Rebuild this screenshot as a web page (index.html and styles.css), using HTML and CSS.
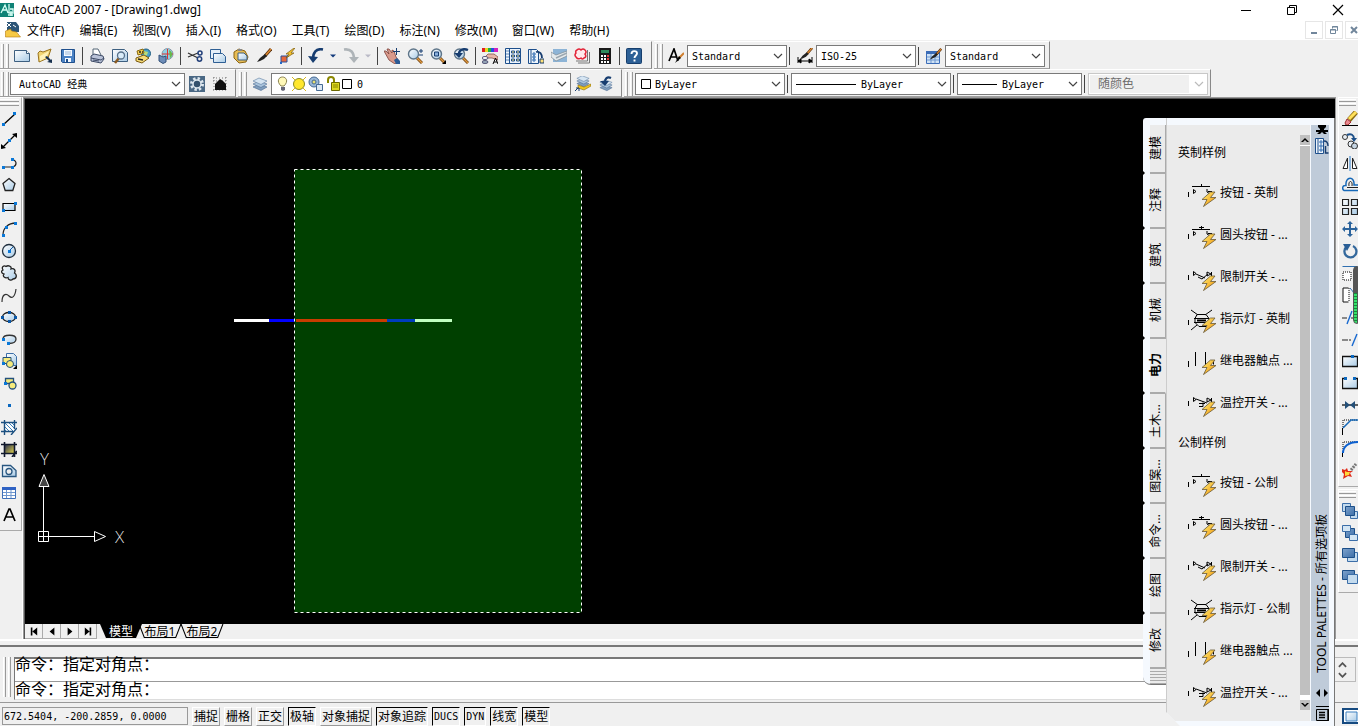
FILE: index.html
```html
<!DOCTYPE html>
<html lang="zh-CN">
<head>
<meta charset="utf-8">
<title>AutoCAD 2007 - [Drawing1.dwg]</title>
<link rel="stylesheet" href="styles.css">
</head>
<body>
<svg class="defs" aria-hidden="true">
  <defs>
    <linearGradient id="page" x1="0" y1="0" x2="1" y2="1"><stop offset="0" stop-color="#fff"/><stop offset="1" stop-color="#a9cbe6"/></linearGradient>
    <linearGradient id="amber" x1="0" y1="0" x2="1" y2="1"><stop offset="0" stop-color="#fff27a"/><stop offset="1" stop-color="#f08a00"/></linearGradient>
    <linearGradient id="steel" x1="0" y1="0" x2="1" y2="1"><stop offset="0" stop-color="#7fa3cc"/><stop offset="1" stop-color="#3c6ea8"/></linearGradient>
    <linearGradient id="dusk" x1="0" y1="0" x2="1" y2="1"><stop offset="0" stop-color="#1c2452"/><stop offset="1" stop-color="#e6d84a"/></linearGradient>
    <symbol id="chev" viewBox="0 0 10 10"><path d="M1 3l4 4 4-4" fill="none" stroke="currentColor" stroke-width="1.2"/></symbol>
    <symbol id="brush" viewBox="0 0 16 16"><path d="M15 1L9 8" stroke="#5a3210" stroke-width="3"/><path d="M15 1L9 8" stroke="#e08a30" stroke-width="1.4"/><path d="M9 6l2 2-3 3-4 2-3 1 3-4z" fill="#222"/></symbol>
    <symbol id="lens" viewBox="0 0 16 16"><path d="M10 10l5 5" stroke="#7a4a14" stroke-width="3"/><path d="M10 10l5 5" stroke="#e09a40" stroke-width="1.2"/><circle cx="6.500" cy="6" r="5" fill="url(#page)" stroke="#5d7488" stroke-width="1.400"/></symbol>
    <symbol id="stack" viewBox="0 0 16 16"><path d="M1 11l6-3 8 3-6 3.500z" fill="#7f9dbd" stroke="#4a6a90" stroke-width=".6"/><path d="M1 8l6-3 8 3-6 3.500z" fill="#a9c3dc" stroke="#4a6a90" stroke-width=".6"/><path d="M1 5l6-3 8 3-6 3.500z" fill="#d6e5f2" stroke="#5a7aa0" stroke-width=".6"/></symbol>
    <symbol id="bolt" viewBox="0 0 16 16"><path d="M9.500 1L1 8.500h5L2.500 15.500 15 6.500H9.500L14 1z" fill="url(#amber)" stroke="#6b5a38" stroke-width=".8"/></symbol>
    <symbol id="push" viewBox="0 0 30 24"><path d="M5 3.500h18M14.500 1v2M1.500 9v5M20 6v3l3 2M21 8.500h4M24.500 8v5" fill="none" stroke="#000"/><path d="M6.500 6.500v4l2.500-2z" fill="none" stroke="#000"/><use href="#bolt" x="14" y="8" width="16" height="16"/></symbol>
    <symbol id="round" viewBox="0 0 30 24"><path d="M5 4.500h18M12 2.500h5M14.500 1v3M1.500 9v5M20 6v3l3 2M21 8.500h4M24.500 8v5" fill="none" stroke="#000"/><path d="M6.500 6.500v4l2.500-2z" fill="none" stroke="#000"/><use href="#bolt" x="14" y="8" width="16" height="16"/></symbol>
    <symbol id="limit" viewBox="0 0 30 24"><path d="M1.500 8v5M6.500 4.500v4l2.500-2zM9 7l9 4M11 10l4 2 6-5M20 5l4 2-4 2zM24.500 5v7" fill="none" stroke="#000"/><use href="#bolt" x="14" y="8" width="16" height="16"/></symbol>
    <symbol id="lamp" viewBox="0 0 30 24"><path d="M4 1l7 5M25 1l-7 5M4 21l6-5M1.500 11v5M10 5.500h9l3 4v4l-3 4h-7l-4-4v-4zM7 9.500h15M7 13.500h15" fill="none" stroke="#000"/><path d="M10 10.500h9v2h-9z"/><use href="#bolt" x="14" y="8" width="16" height="16"/></symbol>
    <symbol id="relay" viewBox="0 0 30 24"><path d="M8.500 1v14M18.500 1v15M1.500 10v6M24 9.500h2.500v4" fill="none" stroke="#000"/><use href="#bolt" x="14" y="8" width="16" height="16"/></symbol>
    <symbol id="thermo" viewBox="0 0 30 24"><path d="M1.500 8v5M6.500 4.500v4l2.500-2zM9 6l11 4M12 13.500h4v-4M20 5l4 2-4 2zM24.500 5v7M12 10.500h6" fill="none" stroke="#000"/><use href="#bolt" x="14" y="8" width="16" height="16"/></symbol>
  </defs>
</svg>
<div class="app">
  <header class="titlebar">
    <svg class="logo" viewBox="0 0 14 14"><path d="M0 0h14v14H0z" fill="#0f8276"/><path d="M1 10l4-8 3 8M3 7h4M9 1v9h4V6h-3M8 12h5M11 8v5" fill="none" stroke="#d7fff6" stroke-width="1.300"/></svg>
    <h1>AutoCAD 2007 - [Drawing1.dwg]</h1>
    <div class="winbtns">
      <button aria-label="最小化"><svg viewBox="0 0 12 12"><path d="M1 6.500h10" stroke="#000"/></svg></button>
      <button aria-label="还原"><svg viewBox="0 0 12 12"><path d="M1.500 3.500h7v7h-7zM3.500 3.500v-2h7v7h-2" fill="none" stroke="#000"/></svg></button>
      <button aria-label="关闭"><svg viewBox="0 0 12 12"><path d="M1 1l10 10M11 1L1 11" stroke="#000" stroke-width="1.200"/></svg></button>
    </div>
  </header>
  <nav class="menubar">
    <svg class="docicon" viewBox="0 0 16 16"><path d="M2 0h9l3 4v6H2z" fill="#2d5577"/><path d="M2 1l4 4M6 1L2 5M8 3l3 2" stroke="#fff"/><path d="M.500 15V9l5-2 1 2 5 1 4 5z" fill="#f6c944" stroke="#b57a10" stroke-width=".6"/></svg>
    <button>文件(F)</button><button>编辑(E)</button><button>视图(V)</button><button>插入(I)</button><button>格式(O)</button><button>工具(T)</button><button>绘图(D)</button><button>标注(N)</button><button>修改(M)</button><button>窗口(W)</button><button>帮助(H)</button>
    <div class="mdibtns">
      <button aria-label="最小化图形"><svg viewBox="0 0 10 10"><path d="M2 8h6" stroke="#71869b" stroke-width="2"/></svg></button>
      <button aria-label="还原图形"><svg viewBox="0 0 10 10"><path d="M1.500 4.500h5v4h-5zM1 5h6M3.500 3.500v-2h5v4h-1M3 2h6" fill="none" stroke="#71869b"/></svg></button>
      <button aria-label="关闭图形"><svg viewBox="0 0 10 10"><path d="M2 2l6 6M8 2L2 8" stroke="#71869b" stroke-width="2"/></svg></button>
    </div>
  </nav>

  <div class="barrow">
    <div class="bar standard">
      <i class="grip"></i>
      <button class="tb" aria-label="新建"><svg viewBox="0 0 16 16"><path d="M.5 2.500h12l3 3v8H.5z" fill="url(#page)" stroke="#3d5f80"/><path d="M12.500 2.500v3h3" fill="#fff" stroke="#3d5f80"/></svg></button>
      <button class="tb" aria-label="打开"><svg viewBox="0 0 16 16"><path d="M1 5l2-2 3 1 8-3-3 9-9 4z" fill="#f1d574" stroke="#9a7420"/><path d="M3 8l9-5-3 7-6 3" fill="#fff3b8"/><path d="M15 15l-5-1 2-1-4-4 2-1 4 4 1-1z" fill="#16304e"/></svg></button>
      <button class="tb" aria-label="保存"><svg viewBox="0 0 16 16"><path d="M1.500 1.500h13v13h-12l-1-1z" fill="#4b82c4" stroke="#1f4f8c"/><path d="M4 2h8v6H4zM5 10h6v4H5z" fill="#f4f9ff"/><path d="M5 4h6M5 6h6" stroke="#9db8d6"/><path d="M6 11h2v3H6z" fill="#1f4f8c"/></svg></button>
      <i class="sep"></i>
      <button class="tb" aria-label="打印"><svg viewBox="0 0 16 16"><path d="M4 7V1l5 0 3 6" fill="#fff" stroke="#567"/><path d="M2 8l3-2 9 2 1 3-3 4-10-2z" fill="#b9c2d8" stroke="#3e4b66"/><path d="M2 10l10 2 3-2M4 12l6 1" fill="none" stroke="#3e4b66"/></svg></button>
      <button class="tb" aria-label="打印预览"><svg viewBox="0 0 16 16"><path d="M.5 1.500h12l3 3v9H.5z" fill="url(#page)" stroke="#3d5f80"/><path d="M7 10l-4 5" stroke="#8a5a20" stroke-width="2.500"/><circle cx="9" cy="7.500" r="3.500" fill="#d9ecf9" stroke="#58718a" stroke-width="1.300"/></svg></button>
      <button class="tb" aria-label="发布"><svg viewBox="0 0 16 16"><circle cx="11" cy="5.500" r="4.500" fill="#4aa0c8" stroke="#1f5c80"/><path d="M9 3l4 1-1 3-3 1z" fill="#b9dc7a"/><path d="M2 3l6-2 1 4-6 2z" fill="#f4cf50" stroke="#8a6a10"/><path d="M1 10l8-3 5 3-7 5-6-2z" fill="#f7dc78" stroke="#7a5a10"/><path d="M4 4h2M7 4h1M3 11l5 1" stroke="#222" stroke-width="1.500"/></svg></button>
      <button class="tb" aria-label="三维发布"><svg viewBox="0 0 16 16"><circle cx="9.500" cy="6" r="5.500" fill="#8fd0e4" stroke="#8a9aa8"/><path d="M9.500 1v10M4 6h11" stroke="#d33"/><path d="M11 2c4 2 4 6 1 8z" fill="#68b84a"/><path d="M1 7l4 2 3-1v6l-3 1.500L1 13z" fill="#6e8db8" stroke="#33517a"/></svg></button>
      <i class="sep"></i>
      <button class="tb" aria-label="剪切"><svg viewBox="0 0 16 16"><path d="M1 5l10 5M1 9l10-4" stroke="#333" stroke-width="1.300"/><circle cx="13" cy="5" r="2" fill="none" stroke="#23407a" stroke-width="1.500"/><circle cx="12.500" cy="11" r="2.200" fill="none" stroke="#23407a" stroke-width="1.500"/></svg></button>
      <button class="tb" aria-label="复制"><svg viewBox="0 0 16 16"><path d="M.5 1.500h10v9H.5z" fill="#e6f0f9" stroke="#2f5f94"/><path d="M3.500 5.500h9l3 3v6h-12z" fill="url(#page)" stroke="#2f5f94"/></svg></button>
      <button class="tb" aria-label="粘贴"><svg viewBox="0 0 16 16"><path d="M6 1l6 2 3 6-2 5-7 1-5-5V4z" fill="#e8bd55" stroke="#8a6414"/><path d="M5 5h6l3 3v4H5z" fill="url(#page)" stroke="#3d5f80"/><path d="M5 1h4v2H5z" fill="#888"/></svg></button>
      <button class="tb" aria-label="特性匹配"><svg viewBox="0 0 16 16"><use href="#brush" width="16" height="16"/></svg></button>
      <button class="tb" aria-label="块编辑器"><svg viewBox="0 0 16 16"><path d="M2 8h6v6H2z" fill="#e8683c" stroke="#2a4f9a"/><path d="M1 14h2v2H1zM8 7h2v2H8z" fill="#2468c8"/><path d="M15 0L7 6h3l-3 4 8-5h-3l4-5z" fill="#f6c430" stroke="#7a5a10" stroke-width=".7"/></svg></button>
      <i class="sep"></i>
      <button class="tb" aria-label="放弃"><svg viewBox="0 0 16 16"><path d="M15 1.500C8 0 5 5 5 11" fill="none" stroke="#173d70" stroke-width="2.600"/><path d="M0 8l10 1-5 6z" fill="#173d70"/></svg></button>
      <button class="drop" aria-label="放弃列表"><svg viewBox="0 0 6 6"><path d="M0 1.500h6l-3 3z" fill="#123a7c"/></svg></button>
      <button class="tb" aria-label="重做"><svg viewBox="0 0 16 16"><path d="M1 1.500c7-1 10 3 10 10" fill="none" stroke="#aeb4b8" stroke-width="2.600"/><path d="M6 9h10l-5 6z" fill="#aeb4b8"/></svg></button>
      <button class="drop" aria-label="重做列表"><svg viewBox="0 0 6 6"><path d="M0 1.500h6l-3 3z" fill="#b9b9c6"/></svg></button>
      <i class="sep"></i>
      <button class="tb" aria-label="平移"><svg viewBox="0 0 16 16"><path d="M0 3l2 0 3 3-2-5 2 0 3 4 0-3 2 1 2 6 3 4-4 3-6-4z" fill="#d99a8c" stroke="#7c4038" stroke-width=".8"/><path d="M10 12l3-2 3 3v3h-4z" fill="#2b5a94"/><path d="M12.500 0v7M9 3.500h7" stroke="#173d70"/></svg></button>
      <button class="tb" aria-label="实时缩放"><svg viewBox="0 0 16 16"><use href="#lens" width="16" height="16"/><path d="M12 3h4M14 1v4M12 7h4" stroke="#173d70"/></svg></button>
      <button class="tb" aria-label="窗口缩放"><svg viewBox="0 0 16 16"><use href="#lens" width="16" height="16"/><path d="M4.500 4h4v4h-4z" fill="#8ab0dc" stroke="#173d70"/><path d="M16 12v4h-4z"/></svg></button>
      <button class="tb" aria-label="缩放上一个"><svg viewBox="0 0 16 16"><use href="#lens" width="16" height="16"/><path d="M15 2C10 0 6 2 6 6" fill="none" stroke="#173d70" stroke-width="2.400"/><path d="M1 5h9l-4 5z" fill="#173d70"/></svg></button>
      <i class="sep"></i>
      <button class="tb" aria-label="特性"><svg viewBox="0 0 16 16"><path d="M0 0h3v4H0z" fill="#e02020"/><path d="M3 0h3v4H3z" fill="#e8d820"/><path d="M6 0h3v4H6z" fill="#20b040"/><path d="M9 0h3v4H9z" fill="#2050e0"/><path d="M12 0h4v4h-4z" fill="#d020c0"/><path d="M6 6h6l4 3v3l-6-2-4 0-3-1z" fill="#e8b7a8" stroke="#74423a" stroke-width=".7"/><ellipse cx="3" cy="10" rx="3" ry="1.500" fill="#fff" stroke="#557"/><ellipse cx="3" cy="14" rx="3" ry="1.500" fill="#9ab" stroke="#557"/><path d="M11 16l2.500-6 2.500 6M12 14h3" fill="none" stroke="#000"/></svg></button>
      <button class="tb" aria-label="设计中心"><svg viewBox="0 0 16 16"><path d="M.5.500h15v15H.5z" fill="#eef5fc" stroke="#1d4f8c"/><path d="M4.500 1v14" stroke="#1d4f8c"/><path d="M1 3h3M1 6h3M1 9h3M1 12h3" stroke="#5a86b8"/><path d="M6.500 3h3v2h-3zM11.500 3h3v2h-3zM6.500 7h3v2h-3zM11.500 7h3v2h-3zM6.500 11h3v2h-3zM11.500 11h3v2h-3z" fill="#ffe27a" stroke="#1d4f8c"/></svg></button>
      <button class="tb" aria-label="工具选项板"><svg viewBox="0 0 16 16"><path d="M.5 1.500h8l2 2v12H.5z" fill="#eef5fc" stroke="#1d4f8c"/><path d="M3 1v14" stroke="#1d4f8c"/><path d="M5 5h2v2H5zM5 8h2v2H5zM5 11h2v2H5z" fill="none" stroke="#2f6ab0"/><path d="M8 4c4-1 6 2 6 6" fill="none" stroke="#173d70" stroke-width="1.800"/><path d="M12 11h4v4h-4z" fill="#ffe27a" stroke="#173d70"/></svg></button>
      <button class="tb" aria-label="图纸集"><svg viewBox="0 0 16 16"><path d="M2 1h14v13H2z" fill="#8db4d6"/><path d="M0 4l5 3 11-4v5L5 13 0 9z" fill="#e4e9ec" stroke="#7d8a94" stroke-width=".7"/><path d="M5 10l11-5" stroke="#9aa6ae" stroke-width="1.500"/></svg></button>
      <button class="tb" aria-label="标记集"><svg viewBox="0 0 16 16"><path d="M4 15h11.500V4M2 13h11.500V2" fill="none" stroke="#777"/><path d="M3 2q2-2 4 0 2-2 4 0 2 2 0 4 2 3-1 4 -2 2-3 0-3 2-5-1-2-2 0-4-1-2 1-3z" fill="#ffe9ec" stroke="#e32438" stroke-width="1.500"/></svg></button>
      <button class="tb" aria-label="计算器"><svg viewBox="0 0 16 16"><path d="M2 0h12v16H2z" fill="#1a1a1a"/><path d="M4 2h8v3H4z" fill="#2f8a5c"/><path d="M4 7h2v2H4zM7 7h2v2H7zM4 10h2v2H4zM7 10h2v2H7zM4 13h2v2H4zM7 13h2v2H7zM10 13h2v2h-2z" fill="#fff"/><path d="M10 7h2v2h-2zM10 10h2v2h-2z" fill="#e33"/></svg></button>
      <i class="sep"></i>
      <button class="tb" aria-label="帮助"><svg viewBox="0 0 16 16"><rect x=".5" y=".5" width="15" height="15" rx="1" fill="#2d6096" stroke="#163e6c"/><path d="M5.500 6c0-4 5.500-3.500 5.500-.5 0 2-2.500 2-2.500 4.500M8.500 11.500v2" fill="none" stroke="#fff" stroke-width="1.900"/></svg></button>
    </div>
    <div class="bar">
      <i class="grip"></i>
      <button class="tb" aria-label="文字样式"><svg viewBox="0 0 16 16"><path d="M1 13L6 1l4 12M3 9h6" fill="none" stroke="#000" stroke-width="1.700"/><path d="M16 5l-5 5" stroke="#d08030" stroke-width="2"/><path d="M11 8l2 2-6 5z"/></svg></button>
      <div class="combo w100"><select aria-label="文字样式列表"><option>Standard</option></select><svg class="chev"><use href="#chev"/></svg></div>
      <i class="sep"></i>
      <button class="tb" aria-label="标注样式"><svg viewBox="0 0 16 16"><use href="#brush" x="2" y="-1" width="14" height="14"/><path d="M1 9v6M15 9v6M1 13h14M1 13l3-2v4zM15 13l-3-2v4z" stroke="#000"/></svg></button>
      <div class="combo w100"><select aria-label="标注样式列表"><option>ISO-25</option></select><svg class="chev"><use href="#chev"/></svg></div>
      <i class="sep"></i>
      <button class="tb" aria-label="表格样式"><svg viewBox="0 0 16 16"><path d="M.5 3.500h13v12H.5z" fill="#cfe2f5" stroke="#3c6db8"/><path d="M0 3h14v3H0z" fill="#3c6db8"/><path d="M5 6v9M9 6v9M1 9h12M1 12h12" stroke="#6f97cf"/><use href="#brush" x="3" y="0" width="13" height="13"/></svg></button>
      <div class="combo w100"><select aria-label="表格样式列表"><option>Standard</option></select><svg class="chev"><use href="#chev"/></svg></div>
    </div>
  </div>

  <div class="barrow">
    <div class="bar">
      <i class="grip"></i>
      <div class="combo w175"><select aria-label="工作空间"><option>AutoCAD 经典</option></select><svg class="chev"><use href="#chev"/></svg></div>
      <button class="tb" aria-label="工作空间设置"><svg viewBox="0 0 16 16"><path d="M0 0h16v16H0z" fill="#4a6884"/><circle cx="8" cy="8" r="5.500" fill="none" stroke="#dde6ee" stroke-width="3" stroke-dasharray="2.300 2"/><circle cx="8" cy="8" r="4" fill="#33506c" stroke="#dfe8ef" stroke-width="1.500"/></svg></button>
      <button class="tb" aria-label="我的工作空间"><svg viewBox="0 0 16 16"><path d="M1 2h14M1 5h14M2 1v14M14 1v14M1 14h14" stroke="#777" stroke-dasharray="1 2"/><path d="M3 8l5-5 3 2 3 3v6H3z" fill="#111"/></svg></button>
    </div>
    <div class="bar">
      <i class="grip"></i>
      <button class="tb" aria-label="图层特性"><svg viewBox="0 0 16 16"><use href="#stack" width="16" height="16"/></svg></button>
      <div class="combo w300">
        <svg class="lay" viewBox="0 0 78 16">
          <path d="M6 10C1 5 4 1 7.500 1S14 5 9 10z" fill="#fff8b8" stroke="#8a8250"/><path d="M6 11h4v3l-2 1-2-1z" fill="#667"/>
          <circle cx="24" cy="8" r="5.500" fill="#ffe72e" stroke="#8a8a20"/><path d="M17 1l3 3M31 1l-3 3M17 15l3-3M31 15l-3-3" stroke="#d8b820"/>
          <circle cx="39" cy="6" r="5" fill="#9ab8d8" stroke="#456a94"/><circle cx="39" cy="6" r="2" fill="#e8e070" stroke="#456a94"/><path d="M41.500 8.500h6v6h-6z" fill="#dce8f4" stroke="#456a94"/>
          <path d="M53 7V4c0-4 6-4 6 0v4" fill="none" stroke="#8a8600" stroke-width="2"/><path d="M56.500 6.500h8v8h-8z" fill="#ddd820" stroke="#6c6800"/><path d="M58 9h5M58 11h5" stroke="#8a8600"/>
          <path d="M67.500 3.500h9v9h-9z" fill="#fff" stroke="#000"/>
        </svg>
        <select aria-label="图层"><option>0</option></select><svg class="chev"><use href="#chev"/></svg></div>
      <button class="tb" aria-label="置为当前图层"><svg viewBox="0 0 16 16"><use href="#stack" x="1" y="-2" width="14" height="14"/><path d="M3 9l6 2 7-3v2l-7 4-6-2z" fill="#f0c61c" stroke="#8a6a10" stroke-width=".6"/><path d="M0 15l3-3M1 12h3v3" fill="none" stroke="#173d70"/></svg></button>
      <button class="tb" aria-label="上一个图层"><svg viewBox="0 0 16 16"><use href="#stack" y="2" width="16" height="14"/><path d="M13 2C9 0 7 3 7 6" fill="none" stroke="#173d70" stroke-width="2.200"/><path d="M2 5h9l-4 5z" fill="#173d70"/></svg></button>
    </div>
    <div class="bar tight">
      <i class="grip"></i>
      <div class="combo w150"><svg class="swatch" viewBox="0 0 10 10"><path d="M.5.500h9v9h-9z" fill="#fff" stroke="#000"/></svg><select aria-label="颜色"><option>ByLayer</option></select><svg class="chev"><use href="#chev"/></svg></div>
      <i class="sep"></i>
      <div class="combo w160"><i class="line long"></i><select aria-label="线型"><option>ByLayer</option></select><svg class="chev"><use href="#chev"/></svg></div>
      <i class="sep"></i>
      <div class="combo w125"><i class="line"></i><select aria-label="线宽"><option>ByLayer</option></select><svg class="chev"><use href="#chev"/></svg></div>
      <i class="sep"></i>
      <div class="combo w120 off"><select aria-label="打印样式" disabled><option>随颜色</option></select><svg class="chev"><use href="#chev"/></svg></div>
    </div>
  </div>

  <main class="work">
    <div class="side left">
      <div class="vbar">
        <i class="hgrip"></i>
        <button aria-label="直线"><svg viewBox="0 0 16 16"><path d="M2 14L14 3" stroke="#000" stroke-width="1.300"/><path d="M1 12h3v3H1zM12 1h3v3h-3z" fill="#0a78d8"/></svg></button>
        <button aria-label="构造线"><svg viewBox="0 0 16 16"><path d="M1 15L15 1" stroke="#000" stroke-width="1.300"/><path d="M0 16v-5l5 4zM16 0v5l-5-4z"/><path d="M7 6h3v3H7z" fill="#0a78d8"/></svg></button>
        <button aria-label="多段线"><svg viewBox="0 0 16 16"><path d="M2 12h10c5-2 3-8-1-7" fill="none" stroke="#222" stroke-width="1.200"/><path d="M1 11h3v3H1zM10 11h3v3h-3zM10 3h3v3h-3z" fill="#0a78d8"/></svg></button>
        <button aria-label="正多边形"><svg viewBox="0 0 16 16"><path d="M8 1.500l6 5-2.200 7H4.200L2 6.500z" fill="url(#page)" stroke="#222" stroke-width="1.300"/></svg></button>
        <button aria-label="矩形"><svg viewBox="0 0 16 16"><path d="M2 4.500h12v7H2z" fill="url(#page)" stroke="#000" stroke-width="1.200"/><path d="M1 10h3v3H1zM13 3h3v3h-3z" fill="#0a78d8"/></svg></button>
        <button aria-label="圆弧"><svg viewBox="0 0 16 16"><path d="M2 14C2 7 7 2 15 2" fill="none" stroke="#222" stroke-width="1.300"/><path d="M1 13h3v3H1zM4 5h3v3H4zM13 1h3v3h-3z" fill="#0a78d8"/></svg></button>
        <button aria-label="圆"><svg viewBox="0 0 16 16"><circle cx="8" cy="8" r="6.500" fill="url(#page)" stroke="#1f2f3f" stroke-width="1.300"/><path d="M8 8l4-4" stroke="#0a58a8"/><path d="M7 7h3v3H7z" fill="#0a78d8"/></svg></button>
        <button aria-label="修订云线"><svg viewBox="0 0 16 16"><path d="M2 5C0 2 3 0 5 1.500 7 0 11 1 10 4c3-1 5 1 3.500 4 3 2 2 6-1.500 6-2 2-5 1-5-1.500-3 1-6-1-4-3.500C0 8 0 6 2 5z" fill="url(#page)" stroke="#222" stroke-width="1.300"/></svg></button>
        <button aria-label="样条曲线"><svg viewBox="0 0 16 16"><path d="M1 15c0-8 4-9 7-6s6 1 7-7" fill="none" stroke="#333" stroke-width="1.200"/></svg></button>
        <button aria-label="椭圆"><svg viewBox="0 0 16 16"><ellipse cx="8" cy="8" rx="6.500" ry="4.500" fill="url(#page)" stroke="#222" stroke-width="1.300"/><path d="M0 7h3v3H0zM13 7h3v3h-3zM7 2h3v3H7zM7 11h3v3H7z" fill="#0a58a8"/></svg></button>
        <button aria-label="椭圆弧"><svg viewBox="0 0 16 16"><path d="M2 8c0-5 13-5 13 0 0 3-3 4.500-7 4.500" fill="url(#page)" stroke="#333" stroke-width="1.300"/><path d="M1 7h3v3H1zM6 11h3v3H6z" fill="#0a78d8"/></svg></button>
        <button aria-label="插入块"><svg viewBox="0 0 16 16"><path d="M5.500.500h7l3 3v9h-10z" fill="url(#page)" stroke="#3c6ea8"/><path d="M2 4.500h8v6H2z" fill="#f6eb7c" stroke="#23507c"/><circle cx="9" cy="11" r="3.500" fill="#f6eb7c" stroke="#23507c"/><path d="M1 9h3v3H1z" fill="#0a78d8"/><path d="M16 12v4h-4z"/></svg></button>
        <button aria-label="创建块"><svg viewBox="0 0 16 16"><path d="M4.500 3.500h8v5h-8z" fill="#f6eb7c" stroke="#23507c" stroke-width="1.300"/><circle cx="11.500" cy="10.500" r="3.500" fill="#f6eb7c" stroke="#23507c" stroke-width="1.300"/><path d="M3 7h3v3H3z" fill="#0a78d8"/></svg></button>
        <button aria-label="点"><svg viewBox="0 0 16 16"><path d="M7 7h3v3H7z" fill="#0a68c0"/></svg></button>
        <button aria-label="图案填充"><svg viewBox="0 0 16 16"><path d="M4 4h9v9H4z" fill="#fff"/><path d="M4 8l5 5M4 4l9 9M8 4l5 5M4 11l2 2M11 4l2 2" stroke="#3c80b8"/><path d="M0 3.500h16M0 12.500h12M3.500 1v15M13.500 1v9M10 16l6-7" stroke="#1c5080" stroke-width="1.400"/></svg></button>
        <button aria-label="渐变色"><svg viewBox="0 0 16 16"><path d="M3 3h10v10H3z" fill="url(#dusk)"/><path d="M0 3.500h16M0 12.500h16M3.500 1v15M13.500 1v15M11 16l5-6" stroke="#10182c" stroke-width="1.600"/></svg></button>
        <button aria-label="面域"><svg viewBox="0 0 16 16"><path d="M1.500 2.500h8l5.500 5v6H1.500z" fill="url(#page)" stroke="#285680" stroke-width="1.300"/><circle cx="8" cy="8.500" r="3" fill="#eee" stroke="#285680" stroke-width="1.300"/></svg></button>
        <button aria-label="表格"><svg viewBox="0 0 16 16"><path d="M1.500 2.500h13v11h-13z" fill="#fff" stroke="#4070b8"/><path d="M1 2h14v3H1z" fill="#2f62c4"/><path d="M5.500 5v8M10 5v8M2 7.500h12M2 10.500h12" stroke="#6f97cf"/></svg></button>
        <button aria-label="多行文字"><svg viewBox="0 0 16 16"><path d="M3 14L8 2h1l5 12M5 10h7" fill="none" stroke="#000" stroke-width="1.700"/></svg></button>
      </div>
    </div>
    <section class="doc">
      <div class="canvas">
        <svg class="drawing" width="600" height="527" viewBox="0 0 600 527">
          <path d="M209 220h35v3h-35z" fill="#fff"/><path d="M244 220h26v3h-26z" fill="#00f"/>
          <path d="M269.500 70.500h287v443h-287z" fill="#004000"/>
          <path d="M269.500 70.500h287v443h-287z" fill="none" stroke="#fff" stroke-dasharray="3 3"/>
          <path d="M271 220h91v3h-91z" fill="#c83c00"/><path d="M362 220h28v3h-28z" fill="#003cbe"/><path d="M390 220h37v3h-37z" fill="#c0ffc0"/>
          <path d="M13.500 432.500h10v10h-10zM13.500 437.500h56M18.500 442.500V387M69.500 432.500v10l11-5z" fill="none" stroke="#fff"/>
          <path d="M14 387.500h10l-5-12z" fill="#444" stroke="#fff"/>
          <text x="15" y="366">Y</text><text x="90" y="444">X</text>
        </svg>
      </div>
      <div class="sheets">
        <button class="nav" aria-label="第一个"><svg viewBox="0 0 10 10"><path d="M1 0h2v10H1zM9 0v10L3 5z"/></svg></button>
        <button class="nav" aria-label="上一个"><svg viewBox="0 0 10 10"><path d="M8 0v10L2 5z"/></svg></button>
        <button class="nav" aria-label="下一个"><svg viewBox="0 0 10 10"><path d="M2 0v10l6-5z"/></svg></button>
        <button class="nav" aria-label="最后一个"><svg viewBox="0 0 10 10"><path d="M7 0h2v10H7zM1 0v10l6-5z"/></svg></button>
        <button class="sheet on"><svg viewBox="0 0 42 14" preserveAspectRatio="none"><path d="M0 0h42l-6 14H6z"/></svg><span>模型</span></button>
        <button class="sheet"><svg viewBox="0 0 42 14" preserveAspectRatio="none"><path d="M1 0l5 13.500h30L41 0" fill="none" stroke="#000"/></svg><span>布局1</span></button>
        <button class="sheet"><svg viewBox="0 0 42 14" preserveAspectRatio="none"><path d="M1 0l5 13.500h30L41 0" fill="none" stroke="#000"/></svg><span>布局2</span></button>
      </div>
    </section>
    <div class="side right">
      <div class="vbar">
        <i class="hgrip"></i>
        <button aria-label="删除"><svg viewBox="0 0 16 16"><path d="M14 1L7 9" stroke="#8a6a10" stroke-width="5"/><path d="M14 1L7 8" stroke="#ffe05a" stroke-width="3"/><path d="M5 8l4 3-3 3H4l-1-2z" fill="#e88890" stroke="#a03030"/><path d="M0 14.500h16" stroke="#000"/></svg></button>
        <button aria-label="复制对象"><svg viewBox="0 0 16 16"><circle cx="3" cy="4" r="2.500" fill="#e8eef4" stroke="#333"/><circle cx="9" cy="11" r="3" fill="#e8eef4" stroke="#333"/><circle cx="12.500" cy="13" r="3" fill="#c5d4e2" stroke="#333"/><path d="M5 2c4-2 7 0 7 4" fill="none" stroke="#1c4f88" stroke-width="2"/><path d="M9 5h6l-3 4z" fill="#1c4f88"/></svg></button>
        <button aria-label="镜像"><svg viewBox="0 0 16 16"><path d="M5.500 3v10.500H1zM10.500 3v10.500H15z" fill="#fff" stroke="#222"/><path d="M8 1v15" stroke="#2a7ac8"/></svg></button>
        <button aria-label="偏移"><svg viewBox="0 0 16 16"><path d="M16 13.500H2C0 12 0 8 4 8.500 3-1 13-1 12 8h4" fill="none" stroke="#1769b8" stroke-width="1.500"/><path d="M16 10.500H5M7 9c-1-6 4-6 3 0" fill="none" stroke="#222"/></svg></button>
        <button aria-label="阵列"><svg viewBox="0 0 16 16"><path d="M.5.500h6v6h-6zM9.500.500h6v6h-6zM.5 9.500h6v6h-6zM9.500 9.500h6v6h-6z" fill="url(#page)" stroke="#222" stroke-width="1.200"/></svg></button>
        <button aria-label="移动"><svg viewBox="0 0 16 16"><path d="M8 0l3 3H9v4h4V5l3 3-3 3V9H9v4h2l-3 3-3-3h2V9H3v2L0 8l3-3v2h4V3H5z" fill="#2b639c"/></svg></button>
        <button aria-label="旋转"><svg viewBox="0 0 16 16"><path d="M5 3.500A6 6 0 1 0 11 3" fill="none" stroke="#33689c" stroke-width="2.300"/><path d="M1 1h8L5 8z" fill="#2b5f96"/></svg></button>
        <button aria-label="缩放对象"><svg viewBox="0 0 16 16"><path d="M.5 1.500h15" stroke="#2f6fb0"/><path d="M1 7h8v8H1z" fill="#fff" stroke="#000" stroke-dasharray="1 1"/></svg></button>
        <button aria-label="拉伸"><svg viewBox="0 0 16 16"><path d="M6.500 1H1v14h5.500" fill="#fff" stroke="#111"/><path d="M7 1v14" stroke="#111" stroke-dasharray="1 1"/><path d="M8 1c4 4 5 8 8 13" fill="none" stroke="#2f6fb0"/></svg></button>
        <button aria-label="修剪"><svg viewBox="0 0 16 16"><path d="M0 9h5M9 9h7" stroke="#222"/><path d="M5 15L10 2" stroke="#1769d0" stroke-width="1.400"/></svg></button>
        <button aria-label="延伸"><svg viewBox="0 0 16 16"><path d="M0 9h4" stroke="#222"/><path d="M4 9h6" stroke="#222" stroke-dasharray="2 1"/><path d="M10 15l5-12" stroke="#1769d0" stroke-width="1.400"/></svg></button>
        <button aria-label="打断于点"><svg viewBox="0 0 16 16"><path d="M.5 3.500h15v10H.5z" fill="url(#page)" stroke="#111" stroke-width="1.300"/><path d="M9 2h3v3H9z" fill="#0a68c0"/></svg></button>
        <button aria-label="打断"><svg viewBox="0 0 16 16"><path d="M3 3.500H.500v10h15v-10H13" fill="url(#page)" stroke="#111" stroke-width="1.300"/><path d="M2 2h3v3H2zM11 2h3v3h-3z" fill="#0a68c0"/></svg></button>
        <button aria-label="合并"><svg viewBox="0 0 16 16"><path d="M0 8h16" stroke="#111" stroke-width="1.300"/><path d="M3 4l5 4-5 4zM13 4L8 8l5 4z" fill="#234f78"/></svg></button>
        <button aria-label="倒角"><svg viewBox="0 0 16 16"><path d="M1 8V1h14" fill="none" stroke="#000" stroke-dasharray="1 1"/><path d="M.500 16V9" stroke="#000"/><path d="M1 9l8-8h7" fill="none" stroke="#1769b8" stroke-width="1.500"/></svg></button>
        <button aria-label="圆角"><svg viewBox="0 0 16 16"><path d="M1 8V1h14" fill="none" stroke="#000" stroke-dasharray="1 1"/><path d="M.500 16v-4" stroke="#000"/><path d="M1 12C1 6 6 1 16 1" fill="none" stroke="#0c60d0" stroke-width="2"/></svg></button>
        <button aria-label="分解"><svg viewBox="0 0 16 16"><path d="M9 7l5-6" stroke="#777" stroke-width="3" stroke-dasharray="2 1"/><path d="M0 6l3 1 2-2 1 3 5 0-3 2 2 4-4-1-5 3 1-5-2-2z" fill="#e02a18"/><path d="M3 8l2 1 3 0-1 3-4 1z" fill="#ffd83a"/></svg></button>
      </div>
      <div class="vbar">
        <i class="hgrip"></i>
        <button aria-label="前置"><svg viewBox="0 0 16 16"><path d="M.5.500h8v8h-8zM8.500 8.500h7v7h-7z" fill="#c4dbee" stroke="#3c6ea8"/><path d="M3.500 3.500h9v9h-9z" fill="url(#steel)" stroke="#1c4f88"/></svg></button>
        <button aria-label="后置"><svg viewBox="0 0 16 16"><path d="M3.500 3.500h9v9h-9z" fill="url(#steel)" stroke="#1c4f88"/><path d="M.5.500h8v6h-8zM7.500 9.500h8v6h-8z" fill="#d4e6f4" stroke="#3c6ea8"/></svg></button>
        <button aria-label="置于对象之上"><svg viewBox="0 0 16 16"><path d="M5.500 5.500h10v9h-10z" fill="#c4dbee" stroke="#3c6ea8"/><path d="M.5 1.500h12v9H.5z" fill="url(#steel)" stroke="#1c4f88"/></svg></button>
        <button aria-label="置于对象之下"><svg viewBox="0 0 16 16"><path d="M.5 1.500h12v9H.5z" fill="url(#steel)" stroke="#1c4f88"/><path d="M5.500 5.500h10v9h-10z" fill="#c4dbee" stroke="#3c6ea8"/></svg></button>
      </div>
      <i class="meter"></i>
    </div>
  </main>

  <section class="command">
    <i class="grip"></i>
    <div class="console">
      <p class="history">命令：指定对角点：</p>
      <label class="prompt">命令：指定对角点：<input type="text" aria-label="命令输入"></label>
    </div>
    <div class="spin">
      <button aria-label="向上滚动"><svg viewBox="0 0 10 6"><path d="M1 5l4-4 4 4" fill="none" stroke="#555" stroke-width="2"/></svg></button>
      <button aria-label="向下滚动"><svg viewBox="0 0 10 6"><path d="M1 1l4 4 4-4" fill="none" stroke="#555" stroke-width="2"/></svg></button>
    </div>
  </section>

  <footer class="status">
    <output class="coords">672.5404, -200.2859, 0.0000</output>
    <button>捕捉</button><button>栅格</button><button>正交</button><button class="on">极轴</button><button>对象捕捉</button><button class="on">对象追踪</button><button class="on mono">DUCS</button><button class="on mono">DYN</button><button class="on">线宽</button><button class="on">模型</button>
    <svg class="clean" viewBox="0 0 16 16"><path d="M1 1h16v14H1z" fill="#fff" stroke="#164a80" stroke-width="2"/><path d="M4 4h11v9H4z" fill="url(#page)" stroke="#3c80c0"/></svg>
  </footer>

  <aside class="palette">
    <div class="tabs">
      <button class="first"><span>建模</span></button><button><span>注释</span></button><button><span>建筑</span></button><button><span>机械</span></button><button class="on"><span>电力</span></button><button><span>土木...</span></button><button><span>图案...</span></button><button><span>命令...</span></button><button><span>绘图</span></button><button><span>修改</span></button>
      <i class="more"></i>
    </div>
    <div class="shell">
      <div class="list">
        <h2>英制样例</h2>
        <ul>
          <li><svg><use href="#push"/></svg>按钮 - 英制</li>
          <li><svg><use href="#round"/></svg>圆头按钮 - ...</li>
          <li><svg><use href="#limit"/></svg>限制开关 - ...</li>
          <li><svg><use href="#lamp"/></svg>指示灯 - 英制</li>
          <li><svg><use href="#relay"/></svg>继电器触点 ...</li>
          <li><svg><use href="#thermo"/></svg>温控开关 - ...</li>
        </ul>
        <h2>公制样例</h2>
        <ul>
          <li><svg><use href="#push"/></svg>按钮 - 公制</li>
          <li><svg><use href="#round"/></svg>圆头按钮 - ...</li>
          <li><svg><use href="#limit"/></svg>限制开关 - ...</li>
          <li><svg><use href="#lamp"/></svg>指示灯 - 公制</li>
          <li><svg><use href="#relay"/></svg>继电器触点 ...</li>
          <li><svg><use href="#thermo"/></svg>温控开关 - ...</li>
        </ul>
      </div>
      <div class="scroll">
        <button aria-label="上滚"><svg viewBox="0 0 10 10"><path d="M1 7l4-4 4 4-2 0-2-2-2 2z"/></svg></button>
        <i class="thumb"></i>
        <button aria-label="下滚"><svg viewBox="0 0 10 10"><path d="M1 3h2l2 2 2-2h2L5 7z"/></svg></button>
      </div>
      <div class="caption">
        <svg class="pin" viewBox="0 0 12 9"><path d="M2 0h8v2L8 4v1h4v2H9l2 2H8L6 7 4 9H1l2-2H0V5h4V4L2 2z"/></svg>
        <svg class="pal" viewBox="0 0 14 16"><path d="M.5.500h8v15h-8z" fill="#eef5fc" stroke="#1d4f8c"/><path d="M3 1v14" stroke="#1d4f8c"/><path d="M5 3h2v2H5zM5 7h2v2H5zM5 11h2v2H5z" fill="none" stroke="#2f6ab0"/><path d="M9 3c3 0 4 2 4 5M10.500 8v7h3" fill="none" stroke="#173d70" stroke-width="1.400"/></svg>
        <strong>TOOL PALETTES - 所有选项板</strong>
        <svg class="hide" viewBox="0 0 12 8"><path d="M0 4l4-4v8zM12 4L8 0v8z"/></svg>
        <svg class="props" viewBox="0 0 13 15"><path d="M0 .5h13M.5 3.500h12v11H.500z" fill="none" stroke="#000"/><path d="M3 6.500h6M3 9h6M3 11.500h6M12 3v12" stroke="#000" stroke-width="1.400"/></svg>
      </div>
    </div>
  </aside>
</div>
</body>
</html>
```
FILE: styles.css
```css
* { box-sizing: border-box; }
body { margin: 0; background: #f0f0f0; color: #000; font-family: "Noto Sans", "Noto Sans CJK SC", sans-serif; font-size: 12px; }
button { margin: 0; padding: 0; border: 0; background: none; color: inherit; font: inherit; }
svg { display: block; }
i { display: block; flex: none; }
.defs { position: absolute; width: 0; height: 0; }
.app { position: relative; display: flex; flex-direction: column; height: 100vh; overflow: hidden; }

.titlebar { display: flex; align-items: center; height: 20px; background: #fff; }
.logo { width: 14px; height: 14px; }
.titlebar h1 { flex: 1; margin: 0; padding-left: 6px; font-size: 12px; font-weight: 400; line-height: 20px; }
.winbtns { display: flex; gap: 34px; padding-right: 14px; }
.winbtns svg { width: 12px; height: 12px; }

.menubar { display: flex; align-items: center; gap: 15px; height: 21px; padding-left: 5px; background: #fff; border-bottom: 1px solid #f0f0f0; }
.menubar > button { line-height: 19px; white-space: nowrap; }
.docicon { width: 16px; height: 16px; margin-right: -9px; }
.mdibtns { display: flex; gap: 2px; margin-left: auto; margin-right: -5px; }
.mdibtns button { padding: 3px; border: 1px solid #e6e6e6; }
.mdibtns svg { width: 10px; height: 10px; }

.barrow { display: flex; height: 28px; }
.bar { display: flex; align-items: center; padding: 3px 4px 1px 0; border-top: 1px solid #fff; border-right: 1px solid #888; border-bottom: 1px solid #a0a0a0; margin-right: 1px; }
.standard { padding-right: 6px; }
.bar + .bar { margin-left: 1px; }
.bar .grip { margin: 0 1px 0 1px; }
.grip { width: 8px; height: 24px; background: linear-gradient(90deg, #fff 0 1px, #f0f0f0 1px 2px, #999 2px 3px, #f0f0f0 3px 5px, #fff 5px 6px, #f0f0f0 6px 7px, #999 7px 8px); }
.sep { width: 1px; height: 18px; margin: 0 2px 0 3px; background: #444; }
.tb { display: grid; place-items: center; flex: none; width: 23px; height: 22px; }
.tb svg { width: 16px; height: 16px; }
.drop { display: grid; place-items: center; width: 12px; height: 22px; }
.drop svg { width: 6px; height: 6px; }
.combo { position: relative; display: flex; align-items: center; flex: none; height: 22px; background: #fff; border: 1px solid #7a7a7a; }
.combo select { flex: 1; min-width: 0; height: 20px; padding: 0 16px 0 4px; border: 0; background: none; color: #000; appearance: none; font-family: "DejaVu Sans Mono", "Noto Sans CJK SC", monospace; font-size: 10px; }
.chev { position: absolute; right: 3px; top: 5px; width: 10px; height: 10px; color: #444; pointer-events: none; }
.w100 { width: 100px; }
.w100 + .sep, .tight .sep { margin: 0 3px 0 2px; }
.w175 { width: 175px; }
.w175 select { padding-left: 8px; }
.w300 { width: 300px; }
.w150 { width: 150px; }
.w160 { width: 160px; }
.w125 { width: 125px; }
.w120 { width: 120px; }
.tight { padding-right: 2px; }
.tight .grip { margin-right: 2px; }
.lay { width: 78px; height: 16px; margin-left: 3px; }
.swatch { width: 10px; height: 10px; margin-left: 5px; }
.swatch + select { padding-left: 4px; }
.line { width: 35px; height: 1px; margin-left: 4px; background: #000; }
.line.long { width: 60px; }
.line + select { padding-left: 5px; }
.off { border-color: #c8c8c8; }
.off select, .off select:disabled { margin: 0 18px 0 1px; padding: 0 0 0 8px; height: 18px; background: #f0f0f0; color: #6d6d6d; font-size: 12px; opacity: 1; }
.off .chev { color: #bbb; }

.work { display: flex; flex: 1; min-height: 0; border-bottom: 2px solid #fff; }
.side { position: relative; flex: none; }
.left { width: 23px; border-right: 1px solid #fff; }
.right { width: 23px; padding-left: 2px; border-left: 1px solid #999; overflow: hidden; }
.vbar { display: flex; flex-direction: column; border-right: 1px solid #aaa; border-bottom: 1px solid #aaa; border-top: 1px solid #fff; padding-bottom: 4px; }
.right .vbar { border-right: 0; border-left: 1px solid #fff; }
.right .vbar + .vbar { margin-top: 2px; }
.hgrip { height: 7px; margin: 1px 2px 2px 0; background: linear-gradient(#fff 0 1px, #f0f0f0 1px 2px, #999 2px 3px, #f0f0f0 3px 4px, #fff 4px 5px, #f0f0f0 5px 6px, #999 6px 7px); }
.vbar button { height: 22px; padding: 3px 0 3px 1px; }
.vbar svg { width: 16px; height: 16px; }
.right .vbar button { padding-left: 3px; }
.meter { position: absolute; top: 169px; right: 0; width: 5px; height: 58px; border: 1px solid #555; border-radius: 4px 0 0 4px; background: linear-gradient(#555 0 26px, transparent 26px), repeating-linear-gradient(#35e06b 0 2px, #168a3a 2px 3px); }

.doc { display: flex; flex: 1; flex-direction: column; min-width: 0; border: 1px solid #999; border-width: 1px 0 0 1px; }
.canvas { flex: 1; min-height: 0; overflow: hidden; background: #000; border: 1px solid #555; border-width: 1px 0 0 1px; }
.drawing text { fill: #ddd; font-family: "Open Sans", sans-serif; font-weight: 300; font-size: 17px; }
.sheets { display: flex; height: 15px; border-left: 1px solid #555; }
.nav { display: grid; place-items: center; width: 18px; border: 1px solid #aaa; border-width: 0 1px 1px 0; }
.nav svg { width: 8px; height: 9px; }
.sheet { position: relative; width: 44px; margin-right: -2px; line-height: 14px; }
.nav + .sheet { width: 42px; margin-left: 3px; margin-right: -4px; }
.sheet svg { position: absolute; inset: 0; width: 100%; height: 14px; }
.sheet span { position: relative; }
.sheet.on { color: #fff; }

.command { display: flex; height: 57px; padding-top: 10px; border-top: 2px solid #777; margin-top: 4px; }
.command .grip { height: 40px; margin: 0 3px 0 3px; }
.console { flex: 1; min-width: 0; height: 43px; border: 1px solid #777; border-width: 2px 0 1px 1px; border-bottom-color: #ddd; background: #fff; font-family: "Liberation Mono", "Noto Sans CJK SC", monospace; font-size: 16px; }
.history { height: 23px; margin: 0; border-bottom: 1px solid #999; line-height: 15px; white-space: nowrap; }
.prompt { display: flex; line-height: 18px; white-space: nowrap; }
.prompt input { flex: 1; min-width: 0; height: 16px; border: 0; background: none; font: inherit; outline: 0; }
.spin { display: flex; flex-direction: column; justify-content: center; gap: 4px; width: 22px; height: 25px; margin-right: 2px; padding-left: 4px; border: 1px solid #bbb; border-width: 1px 1px 1px 0; }
.spin svg { width: 9px; height: 6px; }

.status { display: flex; align-items: center; height: 24px; padding: 3px 0 0 2px; border-top: 1px solid #999; background: #f0f0f0; }
.coords { width: 186px; height: 18px; margin-right: 4px; padding-left: 1px; border: 1px solid #999; line-height: 17px; font-family: "DejaVu Sans Mono", monospace; font-size: 10px; white-space: nowrap; }
.status button { height: 19px; margin-right: 4px; padding: 0 1px; border: 1px solid #fff; border-right-color: #999; border-bottom-color: #999; line-height: 18px; white-space: nowrap; }
.status .on { border-color: #000 #fff #fff #000; }
.status .mono { font-family: "DejaVu Sans Mono", monospace; font-size: 10px; }
.clean { width: 16px; height: 16px; margin-left: auto; }

.palette { position: absolute; top: 118px; right: 23px; bottom: 0; display: flex; width: 192px; }
.tabs { display: flex; flex-direction: column; align-self: flex-start; width: 23px; padding: 7px 0 0 7px; background: #f5f9fe; border-radius: 3px 0 0 8px; border-bottom: 1px solid #777; }
.tabs button { position: relative; display: grid; place-items: center start; height: 55px; border-right: 1px solid #aaa; border-bottom: 2px solid #aaa; background: #ebebeb; }
.tabs .first { height: 49px; }
.tabs .on { border-right-color: #ebebeb; font-weight: 700; }
.tabs button::after { content: ""; position: absolute; left: -8px; bottom: -4px; border: 3px solid transparent; border-left-color: #000; }
.tabs button:last-of-type::after { display: none; }
.tabs span, .caption strong { writing-mode: vertical-rl; text-orientation: sideways; transform: rotate(180deg); line-height: 12px; white-space: nowrap; }
.more { height: 15px; background: repeating-linear-gradient(#ebebeb 0 2px, #aaa 2px 3px); }
.shell { display: flex; flex: 1; min-width: 0; padding: 7px 5px 5px 0; background: #f5f9fe; border-right: 1px solid #777; border-left: 1px solid #ccc; clip-path: polygon(0 0, 100% 0, 100% 100%, 14px 100%, 0 calc(100% - 14px)); }
.list { flex: 1; min-width: 0; overflow: hidden; background: #ebebeb; }
.list h2 { height: 38px; margin: 0; padding: 18px 0 0 11px; font-size: 12px; font-weight: 400; line-height: 20px; }
.list ul { margin: 0; padding: 8px 0 0 20px; list-style: none; }
.list ul + h2 { height: 30px; padding-top: 10px; }
.list li { display: flex; align-items: center; gap: 3px; height: 42px; white-space: nowrap; }
.list li svg { width: 30px; height: 24px; margin-top: 6px; }
.scroll { display: flex; flex-direction: column; width: 10px; padding-top: 10px; padding-bottom: 11px; background: linear-gradient(#ebebeb 0 10px, #c0c0c0 10px calc(100% - 12px), #ebebeb 0); }
.scroll svg { width: 10px; height: 10px; background: #c0c0c0; }
.thumb { flex: 1; border: 1px solid #fff; border-width: 1px 0 5px; }
.caption { display: flex; flex-direction: column; align-items: center; width: 18px; margin-left: 1px; padding-left: 4px; background: #bfcbd9; overflow: hidden; }
.pin { width: 12px; height: 9px; }
.pal { width: 14px; height: 16px; margin-top: 4px; }
.caption strong { margin-top: auto; font-weight: 400; }
.hide { width: 12px; height: 8px; margin: 16px 0 9px; }
.props { width: 13px; height: 15px; }
```
